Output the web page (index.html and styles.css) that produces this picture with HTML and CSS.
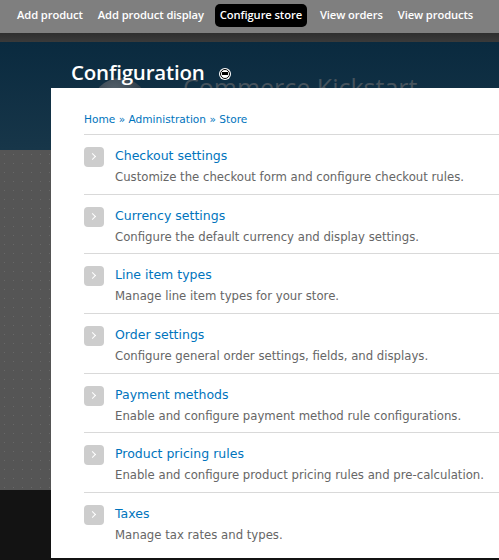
FILE: index.html
```html
<!DOCTYPE html>
<html>
<head>
<meta charset="utf-8">
<link rel="stylesheet" href="styles.css">
</head>
<body>
<nav class="toolbar">
  <a class="tool">Add product</a>
  <a class="tool">Add product display</a>
  <a class="tool active">Configure store</a>
  <a class="tool">View orders</a>
  <a class="tool">View products</a>
</nav>
<div class="shadow"></div>
<div class="page">
  <header class="header">
    <span class="logo-mark"></span>
    <span class="logo-text">Commerce Kickstart</span>
    <h1 class="title">Configuration <span class="toggle"></span></h1>
  </header>
  <main class="panel">
    <div class="breadcrumb"><a>Home</a> » <a>Administration</a> » <a>Store</a></div>
    <ul class="list">
      <li class="item"><span class="arrow"></span><div class="body"><a class="name">Checkout settings</a><p class="desc">Customize the checkout form and configure checkout rules.</p></div></li>
      <li class="item"><span class="arrow"></span><div class="body"><a class="name">Currency settings</a><p class="desc">Configure the default currency and display settings.</p></div></li>
      <li class="item"><span class="arrow"></span><div class="body"><a class="name">Line item types</a><p class="desc">Manage line item types for your store.</p></div></li>
      <li class="item"><span class="arrow"></span><div class="body"><a class="name">Order settings</a><p class="desc">Configure general order settings, fields, and displays.</p></div></li>
      <li class="item"><span class="arrow"></span><div class="body"><a class="name">Payment methods</a><p class="desc">Enable and configure payment method rule configurations.</p></div></li>
      <li class="item"><span class="arrow"></span><div class="body"><a class="name">Product pricing rules</a><p class="desc">Enable and configure product pricing rules and pre-calculation.</p></div></li>
      <li class="item"><span class="arrow"></span><div class="body"><a class="name">Taxes</a><p class="desc">Manage tax rates and types.</p></div></li>
    </ul>
  </main>
</div>
</body>
</html>
```
FILE: styles.css
```css
html, body {
  margin: 0;
  padding: 0;
  height: 560px;
  overflow: hidden;
  background: #121212;
  font-family: "DejaVu Sans", Verdana, sans-serif;
}
.toolbar {
  height: 33px;
  background: #7f7f7f;
  display: flex;
  align-items: flex-start;
  padding: 4px 0 0 11px;
  gap: 3px;
  box-sizing: border-box;
  white-space: nowrap;
}
.tool {
  flex: none;
  color: #fff;
  font-family: "Open Sans", sans-serif;
  font-size: 11.2px;
  font-weight: 600;
  line-height: 16px;
  padding: 3px 6px 4px;
  border-radius: 5px;
  letter-spacing: -0.1px;
}
.tool.active {
  background: #000;
  padding: 3px 5px 4px;
  margin: 0 4px 0 2px;
}
.shadow {
  height: 9px;
  background: linear-gradient(#2e2e2e, #3a3a3a);
}
.page {
  height: 518px;
  background:
    linear-gradient(#0a2a3f 0, #173649 108px, transparent 108px),
    radial-gradient(circle, rgba(255,255,255,0.11) 0.7px, transparent 1px),
    #555;
  background-repeat: no-repeat, repeat, no-repeat;
  background-size: 100% 100%, 9px 9px, auto;
  position: relative;
}
.page::after {
  content: "";
  position: absolute;
  left: 0; right: 0; bottom: 0;
  height: 70px;
  background: #131313;
}
.header {
  height: 46px;
  position: relative;
}
.logo-mark {
  position: absolute;
  left: 92px;
  top: 36px;
  width: 56px;
  height: 56px;
  border-radius: 50%;
  background: radial-gradient(circle at 40% 25%, #56626c 0, #34434f 45%, #20333f 100%);
}
.logo-text {
  position: absolute;
  left: 183px;
  top: 33px;
  color: #46535d;
  font-family: "Open Sans", sans-serif;
  font-size: 25px;
  line-height: 25px;
  white-space: nowrap;
}
.title {
  position: relative;
  margin: 0;
  padding: 17px 0 0 71px;
  color: #fff;
  font-family: "Open Sans", sans-serif;
  font-weight: 600;
  font-size: 20.5px;
  line-height: 26px;
  display: flex;
  align-items: center;
  letter-spacing: -0.2px;
}
.toggle {
  width: 8px;
  height: 8px;
  border: 1.5px solid #000;
  border-radius: 50%;
  background: #fff;
  margin-left: 15px;
  margin-top: 3px;
  position: relative;
  box-shadow: 0 0 0 1px #fff;
}
.toggle::after {
  content: "";
  position: absolute;
  left: 1px; right: 1px;
  top: 2.5px;
  height: 3px;
  background: #000;
}
.panel {
  position: relative;
  z-index: 1;
  margin-left: 51px;
  height: 470px;
  background: #fff;
  padding: 24px 0 0 33px;
  box-sizing: border-box;
}
.breadcrumb {
  font-size: 10.6px;
  color: #0074bd;
  line-height: 14px;
  padding-bottom: 8px;
  border-bottom: 1px solid #d9d9d9;
}
.breadcrumb a { color: #0074bd; }
.list {
  list-style: none;
  margin: 0;
  padding: 0;
}
.item {
  display: flex;
  gap: 11px;
  height: 59.67px;
  border-bottom: 1px solid #d9d9d9;
  box-sizing: border-box;
  padding-top: 12px;
}
.item:last-child { border-bottom: none; }
.arrow {
  width: 20px;
  height: 20px;
  border-radius: 4px;
  background: #cdcdcd;
  flex: none;
  position: relative;
}
.arrow::after {
  content: "";
  position: absolute;
  left: 6px;
  top: 7px;
  width: 4px;
  height: 4px;
  border-right: 1.5px solid #fff;
  border-top: 1.5px solid #fff;
  transform: rotate(45deg);
}
.name {
  display: block;
  color: #0074bd;
  font-size: 12.5px;
  line-height: 18px;
}
.desc {
  margin: 5px 0 0;
  color: #666;
  font-size: 11.7px;
  line-height: 15px;
}
```
